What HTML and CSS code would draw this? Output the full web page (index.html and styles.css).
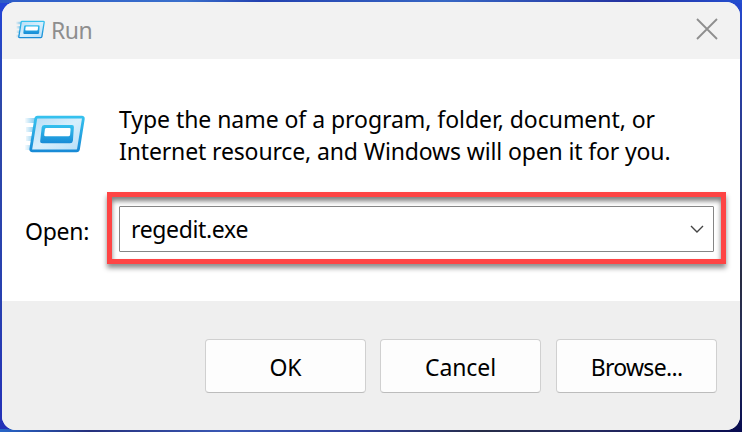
FILE: index.html
```html
<!DOCTYPE html>
<html lang="en">
<head>
<meta charset="utf-8">
<title>Run</title>
<link rel="stylesheet" href="styles.css">
</head>
<body>
<svg width="0" height="0" class="defs" aria-hidden="true">
  <defs>
    <linearGradient id="edge" x1="0" y1="0" x2="0" y2="1"><stop offset="0" stop-color="#35c1ee"/><stop offset="1" stop-color="#188bd6"/></linearGradient>
    <linearGradient id="face" x1="0" y1="0" x2="1" y2="1"><stop offset="0" stop-color="#b5dcf5"/><stop offset=".5" stop-color="#d8effc"/><stop offset="1" stop-color="#b5def8"/></linearGradient>
    <linearGradient id="trail" x1="0" y1="0" x2="1" y2="0"><stop offset="0" stop-color="#5cb8e8" stop-opacity=".05"/><stop offset="1" stop-color="#5cb8e8" stop-opacity=".8"/></linearGradient>
    <symbol id="run" viewBox="0 0 60 38">
      <path fill="url(#trail)" d="M0 3h11v5H0zM1 12h8v5H1zM1 21h7v5H1zM0 30h6v5H0z"/>
      <path d="M12.500 2.200h44.300q1.800 0 1.500 1.800L53.500 34q-.3 1.800-2 1.800H7.500q-2 0-1.700-1.800L10.700 4q.3-1.800 1.800-1.800z" fill="url(#face)" stroke="url(#edge)" stroke-width="2.800"/>
      <path d="M19.500 10H47q2.100 0 1.900 2.300l-1 13.500q-.3 2.500-2.900 2.500H17.500q-2.600 0-2.300-2.500l1.500-13.500q.4-2.300 2.800-2.300z" fill="url(#edge)"/>
      <path d="M21.500 13H44.500q1.200 0 1.100 1.200l-.5 5.500q-.2 1.500-1.700 1.500H20.500q-1.500 0-1.300-1.500l.7-5.500q.2-1.200 1.600-1.200z" fill="#fff"/>
    </symbol>
  </defs>
</svg>
<main class="window">
  <header class="titlebar">
    <svg class="title-icon"><use href="#run"/></svg>
    <h1 class="title">Run</h1>
    <svg class="close" viewBox="0 0 22 22"><path d="M1 1l20 20M21 1L1 21"/></svg>
  </header>
  <section class="content">
    <div class="intro">
      <svg class="run-icon"><use href="#run"/></svg>
      <p class="message"><span class="line first">Type the name of a program, folder, document, or</span><span class="line second">Internet resource, and Windows will open it for you.</span></p>
    </div>
    <div class="field">
      <label class="label">Open:</label>
      <div class="highlight">
        <div class="combo">
          <span class="value">regedit.exe</span>
          <svg class="chevron" viewBox="0 0 14 8"><path d="M1 1l6 6 6-6"/></svg>
        </div>
      </div>
    </div>
  </section>
  <footer class="actions">
    <button class="button"><span class="ok">OK</span></button>
    <button class="button"><span class="cancel">Cancel</span></button>
    <button class="button last"><span class="browse">Browse...</span></button>
  </footer>
</main>
</body>
</html>
```
FILE: styles.css
```css
* { box-sizing: border-box; }
body {
  margin: 0;
  width: 742px;
  height: 432px;
  padding: 2px;
  overflow: hidden;
  font: 23px/32px "Segoe UI", "Noto Sans", sans-serif;
  color: #000;
  background:
    linear-gradient(90deg, #2d5bc8, #3a70cc 25%, #2341b0 35%, #3767c4 60%, #2432a0 85%, #244fd0) top / 100% 3px no-repeat,
    linear-gradient(90deg, #2866c8, #25307c 12%, #3a58b4 30%, #30409c 48%, #262c48 65%, #252a60 80%, #080c50) bottom / 100% 3px no-repeat,
    linear-gradient(#2244d8, #2d48a8 25%, #2840b0 70%, #2430b8) left / 12px 100% no-repeat,
    linear-gradient(#2448d0, #2c3c90 30%, #282b42 65%, #26305c 80%, #080c50) right / 12px 100% no-repeat;
}
.defs { position: absolute; }
.window {
  width: 738px;
  height: 428px;
  border-radius: 14px;
  overflow: hidden;
  background: #fff;
  display: flex;
  flex-direction: column;
}
.titlebar {
  height: 57px;
  background: #f2f2f2;
  display: flex;
  align-items: center;
  padding: 0 22px 0 14px;
}
.title-icon { width: 29px; height: 19px; margin-bottom: 2px; }
.title { margin: 0 0 1px 6px; font-size: 23px; font-weight: 400; letter-spacing: -.5px; color: #8e8e8e; }
.close { width: 22px; height: 22px; margin: 0 0 3px auto; fill: none; stroke: #8e8e8e; stroke-width: 1.8; }
.content { height: 242px; }
.intro { display: flex; padding: 44px 0 0 23px; }
.run-icon { width: 60px; height: 38px; margin: 12px 0 0 -.5px; }
.message { margin: 0 0 0 34.500px; white-space: nowrap; }
.line { display: block; }
.first { letter-spacing: -.05px; }
.second { letter-spacing: -.14px; }
.field { display: flex; align-items: center; padding: 25px 0 0 23px; }
.label { width: 82px; padding-top: 6px; letter-spacing: -.25px; }
.value { letter-spacing: -.35px; }
.cancel { letter-spacing: -.1px; }
.browse { letter-spacing: -.7px; }
.highlight {
  width: 619px;
  height: 72px;
  border: 5px solid #fe4444;
  padding: 9px 7px;
  box-shadow: 0 4px 5px rgba(0,0,0,.45), inset 0 4px 5px rgba(0,0,0,.5);
}
.combo {
  height: 46px;
  width: 595px;
  border: 1px solid #858585;
  border-radius: 1px;
  background: #fff;
  display: flex;
  align-items: center;
  padding: 0 9px 0 11px;
}
.chevron { width: 14px; height: 8px; margin-left: auto; fill: none; stroke: #444; stroke-width: 1.4; }
.actions {
  flex: 1;
  background: #efefef;
  display: flex;
  justify-content: flex-end;
  gap: 14px;
  padding: 38px 23px 0 0;
}
.button {
  width: 161px;
  height: 54px;
  border: 1px solid #d0d0d0;
  border-bottom-color: #bcbcbc;
  border-radius: 4px;
  background: #fdfdfd;
  color: #000;
  font: inherit;
  padding: 2px 0 0;
}
.last { margin-left: 1px; }
```
